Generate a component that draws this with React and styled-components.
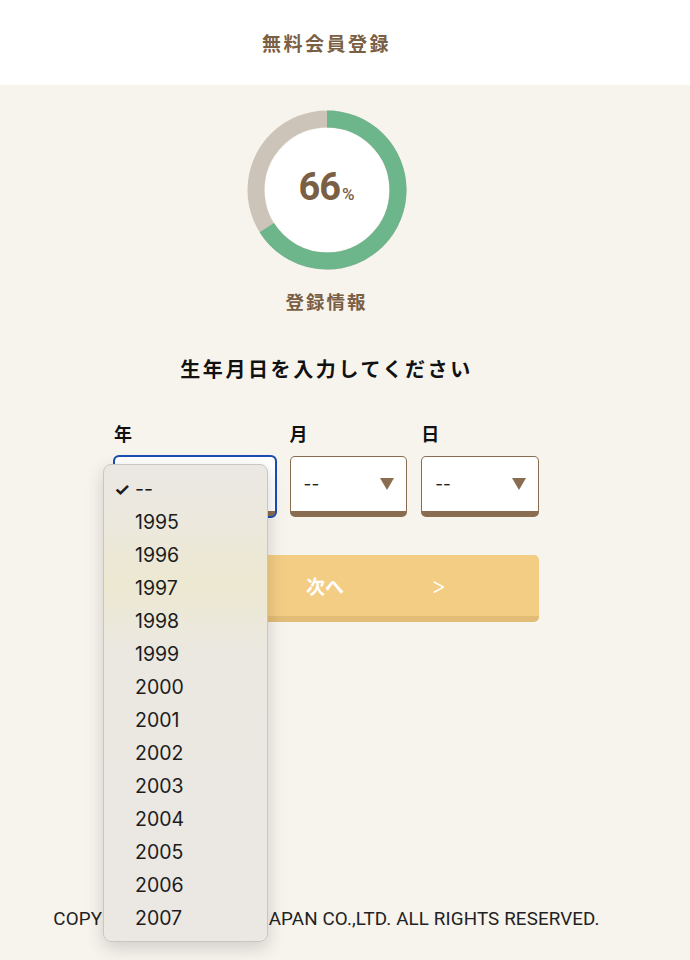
import React from "react";
import styled, { createGlobalStyle } from "styled-components";

const Global = createGlobalStyle`
  html, body { margin: 0; padding: 0; background: #f7f4ee; }
  body { font-family: "Noto Sans CJK JP", "Noto Sans", sans-serif; }
  #root { min-height: 960px; }
  * { box-sizing: border-box; }
`;

const HeaderBar = styled.div`
  background: #fff;
  width: 100%;
`;
const Header = styled.header`
  height: 85px;
  display: flex;
  align-items: center;
  justify-content: center;
  width: 653px;
`;
const Title = styled.h1`
  margin: 0;
  font-size: 19px;
  font-weight: 700;
  color: #7b5f44;
  letter-spacing: 2.5px;
`;

const Main = styled.main`
  width: 653px;
  min-height: 875px;
  display: flex;
  flex-direction: column;
  align-items: center;
  padding-top: 25px;
`;

const Donut = styled.div`
  position: relative;
  width: 160px;
  height: 160px;
`;
const DonutLabel = styled.div`
  position: absolute;
  inset: 0;
  display: flex;
  align-items: baseline;
  justify-content: center;
  padding-top: 57px;
  color: #7b5f44;
  font-family: Roboto, "Noto Sans", sans-serif;
  font-weight: 700;
`;
const Big = styled.span`
  font-size: 38px;
  line-height: 40px;
  letter-spacing: -1px;
`;
const Small = styled.span`
  font-size: 17px;
  margin-left: 2px;
  font-weight: 500;
`;
const StepName = styled.div`
  margin-top: 18px;
  font-size: 18.5px;
  font-weight: 700;
  color: #7b5f44;
  letter-spacing: 2px;
`;
const Heading = styled.h2`
  margin: 40px 0 0;
  font-size: 20px;
  font-weight: 700;
  color: #111;
  letter-spacing: 2.6px;
`;

const Form = styled.div`
  width: 425px;
  margin-top: 39px;
  display: flex;
  flex-direction: column;
`;
const Row = styled.div`
  display: flex;
  gap: 14px;
`;
const Field = styled.div`
  position: relative;
  display: flex;
  flex-direction: column;
  width: ${(p) => p.w}px;
`;
const Label = styled.label`
  font-size: 18px;
  font-weight: 700;
  color: #111;
  height: 22px;
  line-height: 22px;
  margin-bottom: 12px;
`;
const SelectBox = styled.div`
  height: 61px;
  background: #fff;
  border: 1px solid #8a6d50;
  border-bottom: 6px solid #8a6d50;
  border-radius: 5px;
  display: flex;
  align-items: center;
  justify-content: space-between;
  padding: 0 12px 0 13px;
  font-family: Inter, "Liberation Sans", sans-serif;
  font-size: 17px;
  color: #222;
  outline: ${(p) => (p.focused ? "2px solid #1a4db3" : "none")};
  outline-offset: -1px;
`;
const Arrow = styled.span`
  width: 0;
  height: 0;
  border-left: 7px solid transparent;
  border-right: 7px solid transparent;
  border-top: 12px solid #8a6d50;
`;

const NextButton = styled.div`
  margin-top: 38px;
  height: 67px;
  width: 100%;
  border-bottom: 6px solid #e2bd78;
  border-radius: 5px;
  background: #f4cd84;
  color: #fff;
  font-weight: 700;
  font-size: 19px;
  display: flex;
  align-items: center;
  justify-content: flex-start;
  padding-left: 192px;
  cursor: pointer;
`;
const BtnText = styled.span`
  width: 125px;
`;
const Chevron = styled.span`
  font-family: Inter, sans-serif;
  font-weight: 300;
  font-size: 23px;
`;

const Footer = styled.footer`
  margin-top: 286px;
  font-family: Roboto, "Liberation Sans", sans-serif;
  font-size: 18.8px;
  color: #222;
  letter-spacing: 0.12px;
  white-space: nowrap;
`;

const Menu = styled.ul`
  position: absolute;
  left: -11px;
  top: 42px;
  width: 165px;
  height: 478px;
  margin: 0;
  padding: 7px 0 0;
  list-style: none;
  border-radius: 8px;
  border: 1px solid #c9c5c0;
  background: linear-gradient(
    180deg,
    #ebe8e4 0%,
    #ece8dd 12%,
    #ede8d1 25%,
    #ebe8e2 40%,
    #ebe8e4 100%
  );
  box-shadow: 0 6px 18px rgba(0, 0, 0, 0.16);
  z-index: 10;
`;
const Option = styled.li`
  height: 33px;
  display: flex;
  align-items: center;
  padding-left: 31px;
  position: relative;
  font-family: Inter, "Liberation Sans", sans-serif;
  font-size: 19.5px;
  color: #1c1c1c;
`;
const Check = styled.span`
  position: absolute;
  left: 10px;
  font-size: 18px;
  font-weight: 700;
  top: 50%;
  transform: translateY(-50%);
`;

const years = ["--"];
for (let y = 1995; y <= 2007; y++) years.push(String(y));

function Progress() {
  const r = 71;
  const c = 2 * Math.PI * r;
  const pct = 0.66;
  return (
    <Donut>
      <svg width="160" height="160" viewBox="0 0 160 160">
        <circle cx="80" cy="80" r="62" fill="#ffffff" />
        <circle cx="80" cy="80" r={r} fill="none" stroke="#cdc4b9" strokeWidth="17" />
        <circle
          cx="80"
          cy="80"
          r={r}
          fill="none"
          stroke="#6db58b"
          strokeWidth="17"
          strokeDasharray={`${c * pct} ${c}`}
          transform="rotate(-90 80 80)"
        />
      </svg>
      <DonutLabel>
        <Big>66</Big>
        <Small>%</Small>
      </DonutLabel>
    </Donut>
  );
}

export default function App() {
  return (
    <>
      <Global />
      <HeaderBar>
        <Header>
          <Title>無料会員登録</Title>
        </Header>
      </HeaderBar>
      <Main>
        <Progress />
        <StepName>登録情報</StepName>
        <Heading>生年月日を入力してください</Heading>
        <Form>
          <Row>
            <Field w={162}>
              <Label>年</Label>
              <SelectBox focused>
                <span>--</span>
                <Arrow />
              </SelectBox>
              <Menu>
                {years.map((y, i) => (
                  <Option key={y}>
                    {i === 0 && <Check>✓</Check>}
                    {y}
                  </Option>
                ))}
              </Menu>
            </Field>
            <Field w={118}>
              <Label>月</Label>
              <SelectBox>
                <span>--</span>
                <Arrow />
              </SelectBox>
            </Field>
            <Field w={118}>
              <Label>日</Label>
              <SelectBox>
                <span>--</span>
                <Arrow />
              </SelectBox>
            </Field>
          </Row>
          <NextButton role="button">
            <BtnText>次へ</BtnText>
            <Chevron>&gt;</Chevron>
          </NextButton>
        </Form>
        <Footer>COPYRIGHT © SAMPLE JAPAN CO.,LTD. ALL RIGHTS RESERVED.</Footer>
      </Main>
    </>
  );
}
